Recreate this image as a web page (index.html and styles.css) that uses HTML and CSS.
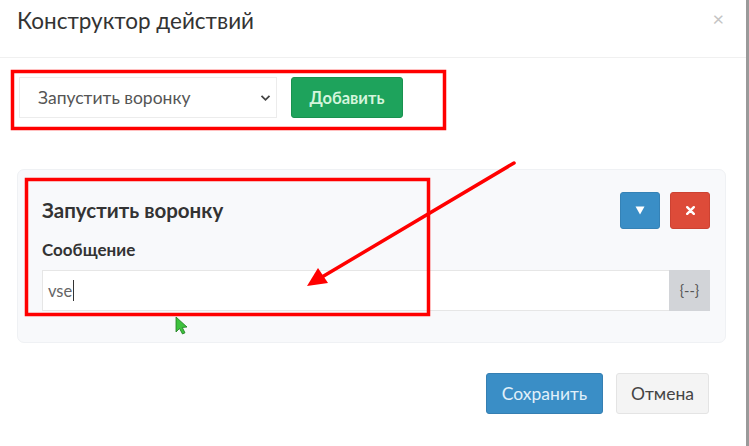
FILE: index.html
```html
<!DOCTYPE html>
<html lang="ru">
<head>
<meta charset="utf-8">
<title>Конструктор действий</title>
<link rel="stylesheet" href="styles.css">
</head>
<body>
<div class="modal">
  <div class="modal-header">
    <h4 class="modal-title">Конструктор действий</h4>
    <span class="close">×</span>
  </div>
  <div class="modal-body">
    <div class="add-row">
      <div class="select">
        <span>Запустить воронку</span>
        <svg class="chev" width="11" height="8" viewBox="0 0 11 8"><path d="M1.5 1.8 L5.5 5.8 L9.5 1.8" fill="none" stroke="#444" stroke-width="1.8"/></svg>
      </div>
      <button class="btn btn-success">Добавить</button>
    </div>
    <div class="card">
      <div class="card-head">
        <div class="card-title">Запустить воронку</div>
        <div class="card-tools">
          <button class="btn-sq btn-blue"><svg width="10" height="9" viewBox="0 0 10 9"><path d="M0.5 0.5 H9.5 L5 8.5 Z" fill="#fff"/></svg></button>
          <button class="btn-sq btn-red"><svg width="9" height="9" viewBox="0 0 9 9"><path d="M1.2 1.2 L7.8 7.8 M7.8 1.2 L1.2 7.8" stroke="#fff" stroke-width="2.4" stroke-linecap="round"/></svg></button>
        </div>
      </div>
      <div class="label">Сообщение</div>
      <div class="input-group">
        <div class="input"><span>vse</span><span class="caret"></span></div>
        <div class="addon">{--}</div>
      </div>
    </div>
  </div>
  <div class="modal-footer">
    <button class="btn btn-primary">Сохранить</button>
    <button class="btn btn-default">Отмена</button>
  </div>
  <svg class="annot" width="749" height="446" viewBox="0 0 749 446">
    <rect x="12.5" y="71.5" width="432" height="57" fill="none" stroke="#f00" stroke-width="3.5"/>
    <rect x="26.5" y="179.5" width="402" height="135" fill="none" stroke="#f00" stroke-width="3.5"/>
    <line x1="514" y1="163" x2="322" y2="277" stroke="#f00" stroke-width="3.5" stroke-linecap="round"/>
    <path d="M307 286 L318 268 L328 283 Z" fill="#f00"/>
    <path d="M176 317 L176 332 L179.5 328.5 L182.5 334 L185 332.8 L182.3 327.5 L187 327 Z" fill="#3ec23e" stroke="#1e7a1e" stroke-width="0.8"/>
  </svg>
</div>
</body>
</html>
```

FILE: styles.css
```css
* { box-sizing: border-box; }
html, body { margin: 0; padding: 0; background: #fff; }
body { width: 749px; height: 446px; overflow: hidden; font-family: Lato, "Open Sans", "Noto Sans", sans-serif; color: #333; }

.modal { position: relative; width: 749px; height: 446px; background: #fff; border-right: 3px solid #9a9a9a; }

.modal-header { height: 58px; border-bottom: 1px solid #f0f0f0; display: flex; align-items: flex-start; justify-content: space-between; padding: 7px 22px 0 17px; }
.modal-title { margin: 0; font-size: 22.5px; font-weight: 400; color: #333; line-height: 28px; }
.close { font-size: 20px; color: #c4c4c4; line-height: 20px; margin-top: 1px; }

.modal-body { padding: 19px 37px 0 19px; }

.add-row { display: flex; gap: 14px; height: 41px; }
.select { width: 258px; height: 41px; border: 1px solid #ececec; background: #fff; display: flex; align-items: center; justify-content: space-between; padding: 0 5px 0 18px; font-size: 17.5px; color: #555; }
.chev { margin-top: 1px; }

.btn { font-family: inherit; border: 1px solid transparent; border-radius: 3px; height: 41px; font-size: 17.5px; padding: 0 10px; cursor: pointer; }
.btn-success { width: 112px; background: #1ea35c; border-color: #199250; color: #d4f5dc; font-weight: 700; font-size: 16.5px; }

.card { margin: 51px -17px 0 -2px; height: 174px; background: #f8f9fb; border: 1px solid #eff1f4; border-radius: 7px; padding: 22px 15px 0 24px; }
.card-head { display: flex; justify-content: space-between; align-items: flex-start; }
.card-title { font-size: 20.5px; font-weight: 700; color: #333; margin-top: 5px; line-height: 26px; }
.card-tools { display: flex; gap: 10px; }
.btn-sq { width: 40px; height: 37px; border-radius: 3px; border: 1px solid transparent; display: flex; align-items: center; justify-content: center; padding: 0; }
.btn-blue { background: #3a8ec6; border-color: #3582b6; }
.btn-red { background: #dd4b39; border-color: #cc4232; }

.label { font-size: 17px; font-weight: 700; color: #333; margin-top: 10px; line-height: 22px; }
.input-group { display: flex; margin-top: 9px; height: 41px; }
.input { flex: 1; background: #fff; border: 1px solid #e6e6e6; border-right: none; display: flex; align-items: center; padding-left: 5px; font-size: 16.5px; color: #666; }
.caret { display: inline-block; width: 1px; height: 21px; background: #333; margin-left: 1px; }
.addon { width: 41px; background: #d2d4d8; display: flex; align-items: center; justify-content: center; font-size: 14.5px; color: #555; }

.modal-footer { display: flex; justify-content: flex-end; gap: 13px; padding: 30px 37px 0 0; }
.btn-primary { width: 117px; background: #3a8ec6; border-color: #357fb2; color: #e0f0fa; }
.btn-default { width: 93px; background: #f4f4f4; border-color: #e4e4e4; color: #444; }

.annot { position: absolute; left: 0; top: 0; pointer-events: none; }
```
